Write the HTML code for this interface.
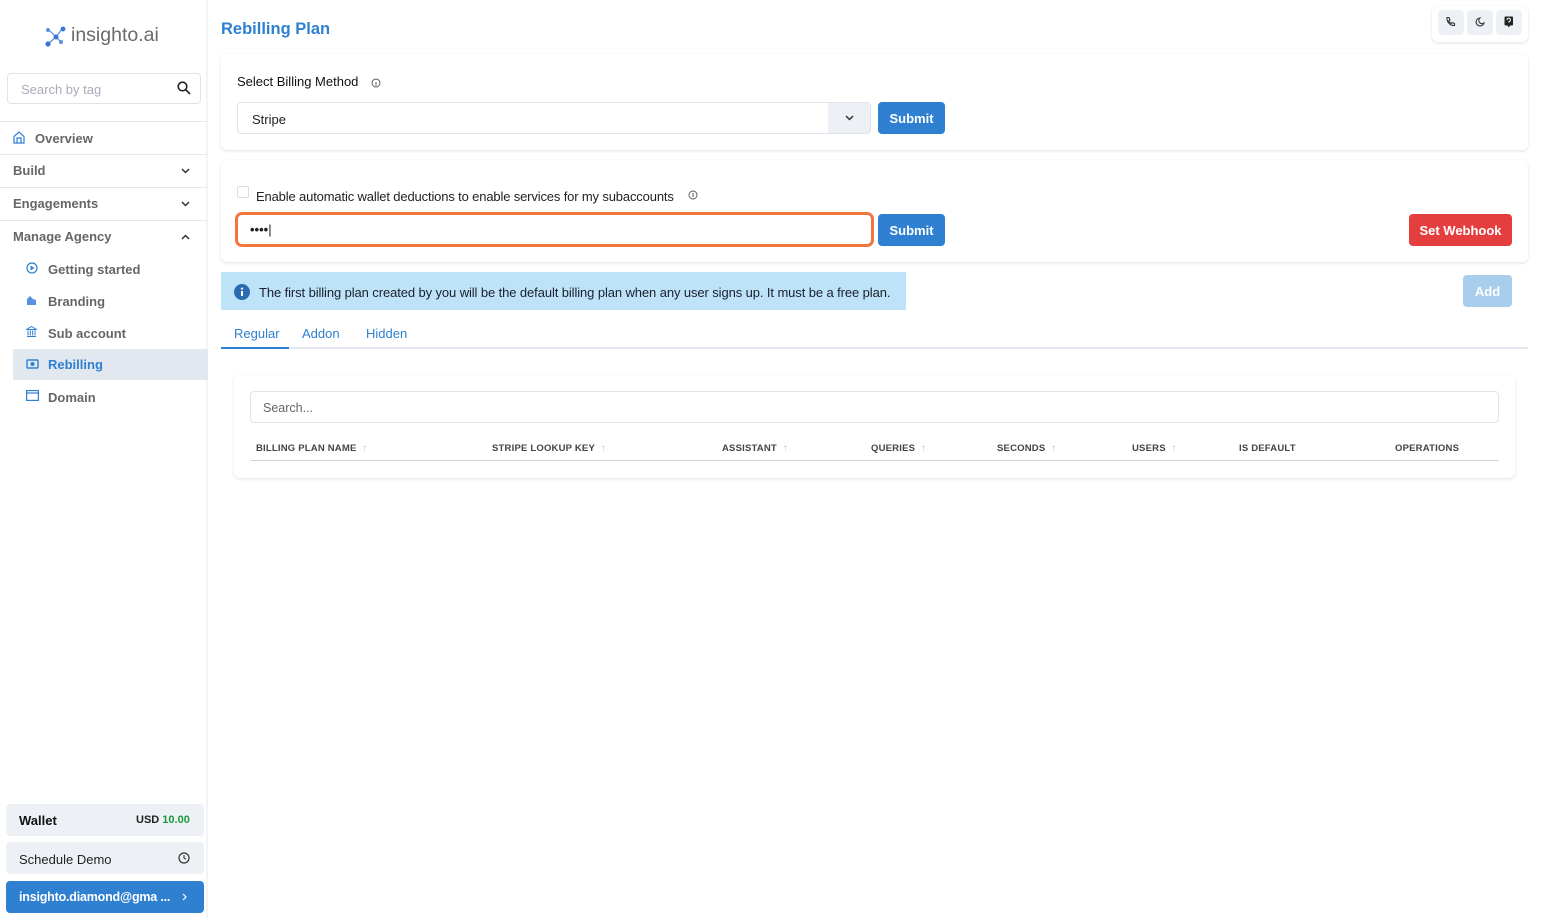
<!DOCTYPE html>
<html><head><meta charset="utf-8"><style>
*{box-sizing:border-box;margin:0;padding:0}
body{width:1541px;height:919px;position:relative;background:#fff;font-family:"Liberation Sans",sans-serif;font-size:13px;color:#222;overflow:hidden}
.a{position:absolute}
.side{left:0;top:0;width:208px;height:919px;border-right:2px solid #f2f4f7;background:#fff}
.nav{left:0;width:207px;height:33px;border-top:1px solid #e3e7ee;font-weight:bold;color:#666;font-size:13px;padding-left:13px;line-height:32px}
.sub{left:13px;width:195px;height:31px;font-weight:bold;color:#666;padding-left:35px;line-height:31px;font-size:13px}
.chev{position:absolute;right:17px;top:13px}
.card{background:#fff;border-radius:6px;box-shadow:0 1px 3px rgba(0,0,0,.12)}
.btn{background:#2f80d1;color:#fff;font-weight:bold;border-radius:4px;text-align:center;font-size:13px}
.th{top:443px;font-size:9.5px;font-weight:bold;color:#444;letter-spacing:.2px}
.th span{color:#bbb;margin-left:6px;font-weight:normal}
</style></head><body>
<div class="a side"></div>
<svg class="a" style="left:44px;top:26px" width="24" height="22" viewBox="0 0 24 22">
<g stroke="#5b8fe0" stroke-width="1.2"><line x1="5" y1="4" x2="12" y2="11"/><line x1="18" y1="3" x2="12" y2="11"/><line x1="12" y1="11" x2="5" y2="17"/><line x1="12" y1="11" x2="17" y2="16"/></g>
<circle cx="4" cy="4" r="2" fill="#5b8fe0"/><circle cx="19" cy="3" r="2.4" fill="#3a75d8"/><circle cx="12" cy="11" r="2.5" fill="#3a75d8"/><circle cx="4" cy="18" r="2.6" fill="#3a75d8"/><circle cx="17" cy="16" r="2" fill="#5b8fe0"/></svg>
<div class="a" style="left:71px;top:24px;font-size:19.5px;color:#6a6a6a">insighto.ai</div>
<div class="a" style="left:7px;top:73px;width:194px;height:31px;border:1px solid #dfe3ea;border-radius:4px"></div>
<div class="a" style="left:21px;top:82px;color:#aab;font-size:13px">Search by tag</div>
<svg class="a" style="left:177px;top:81px" width="14" height="14" viewBox="0 0 14 14"><circle cx="5.5" cy="5.5" r="4.3" fill="none" stroke="#222" stroke-width="1.6"/><line x1="8.7" y1="8.7" x2="13" y2="13" stroke="#222" stroke-width="1.6"/></svg>
<div class="a nav" style="top:121px;padding-left:35px;height:34px;line-height:33px">Overview</div>
<svg class="a" style="left:13px;top:131px" width="12" height="13" viewBox="0 0 12 13"><path d="M1 5.5L6 1l5 4.5V12H1z M4 12V7h4v5" fill="none" stroke="#2f80d1" stroke-width="1.2"/></svg>
<div class="a nav" style="top:154px">Build<svg class="chev" width="9" height="6"><path d="M1 1l3.5 3.5L8 1" fill="none" stroke="#333" stroke-width="1.5"/></svg></div>
<div class="a nav" style="top:187px">Engagements<svg class="chev" width="9" height="6"><path d="M1 1l3.5 3.5L8 1" fill="none" stroke="#333" stroke-width="1.5"/></svg></div>
<div class="a nav" style="top:220px;border-bottom:none">Manage Agency<svg class="chev" width="9" height="6"><path d="M1 5l3.5-3.5L8 5" fill="none" stroke="#333" stroke-width="1.5"/></svg></div>
<div class="a sub" style="top:254px">Getting started</div>
<svg class="a" style="left:26px;top:262px" width="12" height="12"><circle cx="6" cy="6" r="5" fill="none" stroke="#2f80d1" stroke-width="1.2"/><path d="M4.5 3.5L8.5 6L4.5 8.5z" fill="#2f80d1"/></svg>
<div class="a sub" style="top:286px">Branding</div>
<svg class="a" style="left:26px;top:295px" width="11" height="10"><path d="M1 10V4l3-3 3 3 3 1v5z" fill="#5b8fe0"/></svg>
<div class="a sub" style="top:318px">Sub account</div>
<svg class="a" style="left:26px;top:326px" width="11" height="11"><path d="M0.5 3.5L5.5 0.5 10.5 3.5z M1 10.5h9 M2 4.5v5 M4.3 4.5v5 M6.7 4.5v5 M9 4.5v5" fill="none" stroke="#2f80d1" stroke-width="1"/></svg>
<div class="a sub" style="top:349px;background:#e2e8f0;color:#2f80d1">Rebilling</div>
<svg class="a" style="left:26px;top:359px" width="13" height="10"><rect x="1" y="1" width="11" height="8" rx="1" fill="none" stroke="#2f80d1" stroke-width="1.4"/><circle cx="6.5" cy="5" r="2" fill="#2f80d1"/></svg>
<div class="a sub" style="top:382px">Domain</div>
<svg class="a" style="left:26px;top:390px" width="13" height="11"><rect x="0.6" y="0.6" width="11.8" height="9.8" fill="none" stroke="#2f80d1" stroke-width="1.2"/><line x1="0.6" y1="3" x2="12.4" y2="3" stroke="#2f80d1" stroke-width="1.2"/></svg>
<div class="a" style="left:6px;top:804px;width:198px;height:32px;background:#edf1f6;border-radius:4px"></div>
<div class="a" style="left:19px;top:813px;font-weight:bold;font-size:13px;color:#111">Wallet</div>
<div class="a" style="left:136px;top:814px;font-weight:bold;font-size:11px;color:#222">USD <span style="color:#189a3a">10.00</span></div>
<div class="a" style="left:6px;top:842px;width:198px;height:32px;background:#edf1f6;border-radius:4px"></div>
<div class="a" style="left:19px;top:852px;font-size:13px;color:#222">Schedule Demo</div>
<svg class="a" style="left:178px;top:852px" width="12" height="12"><circle cx="6" cy="6" r="5" fill="none" stroke="#333" stroke-width="1.2"/><path d="M6 3v3l2 1.3" fill="none" stroke="#333" stroke-width="1.1"/></svg>
<div class="a" style="left:6px;top:881px;width:198px;height:32px;background:#2f80d1;border-radius:4px"></div>
<div class="a" style="left:19px;top:890px;font-size:12.5px;color:#fff;font-weight:bold;letter-spacing:-.2px">insighto.diamond@gma ...</div>
<svg class="a" style="left:182px;top:893px" width="5" height="8"><path d="M1 1l3 3-3 3" fill="none" stroke="#fff" stroke-width="1.2"/></svg>
<div class="a" style="left:221px;top:20px;font-size:16.5px;font-weight:bold;color:#2f80d1">Rebilling Plan</div>
<div class="a card" style="left:1432px;top:6px;width:96px;height:36px"></div>
<div class="a" style="left:1438px;top:10px;width:26px;height:25px;background:#edf1f6;border-radius:4px"></div>
<div class="a" style="left:1467px;top:10px;width:26px;height:25px;background:#edf1f6;border-radius:4px"></div>
<div class="a" style="left:1496px;top:10px;width:26px;height:25px;background:#edf1f6;border-radius:4px"></div>
<svg class="a" style="left:1445px;top:16px" width="12" height="12"><path d="M2 1.5l2 0 1 2.5-1.3 1 2.3 2.6 1.2-1.1 2.3 1v2c-4 .5-8-3.5-7.5-8z" fill="none" stroke="#333" stroke-width="1.1"/></svg>
<svg class="a" style="left:1475px;top:17px" width="10" height="10"><path d="M5 1a4 4 0 1 0 4 5 3.2 3.2 0 0 1-4-5z" fill="none" stroke="#333" stroke-width="1.1"/></svg>
<svg class="a" style="left:1504px;top:16px" width="10" height="12"><rect x="0.5" y="0.5" width="8.5" height="9" rx="1" fill="#222"/><path d="M3 4a1.7 1.7 0 1 1 2 1.6v1" fill="none" stroke="#fff" stroke-width="1"/><path d="M3.5 9.5h2.5l-1.2 2z" fill="#222"/></svg>
<div class="a card" style="left:221px;top:54px;width:1307px;height:96px"></div>
<div class="a" style="left:237px;top:74px;font-size:13px;color:#111">Select Billing Method</div>
<svg class="a" style="left:371px;top:78px" width="10" height="10"><circle cx="5" cy="5" r="4" fill="none" stroke="#555" stroke-width=".9"/><line x1="5" y1="4" x2="5" y2="7.5" stroke="#555"/></svg>
<div class="a" style="left:237px;top:102px;width:634px;height:32px;border:1px solid #dfe3ea;border-radius:4px"></div>
<div class="a" style="left:828px;top:103px;width:42px;height:30px;background:#edf1f6;border-radius:0 4px 4px 0"></div>
<svg class="a" style="left:845px;top:115px" width="9" height="6"><path d="M1 1l3.5 3.5L8 1" fill="none" stroke="#333" stroke-width="1.5"/></svg>
<div class="a" style="left:252px;top:112px;font-size:13px;color:#222">Stripe</div>
<div class="a btn" style="left:878px;top:102px;width:67px;height:32px;line-height:33px">Submit</div>
<div class="a card" style="left:221px;top:160px;width:1307px;height:102px"></div>
<div class="a" style="left:237px;top:186px;width:12px;height:12px;border:1px solid #d8dce3;border-radius:2px"></div>
<div class="a" style="left:256px;top:189px;font-size:13px;color:#222;letter-spacing:-.15px">Enable automatic wallet deductions to enable services for my subaccounts</div>
<svg class="a" style="left:688px;top:190px" width="10" height="10"><circle cx="5" cy="5" r="4" fill="none" stroke="#555" stroke-width=".9"/><line x1="5" y1="3" x2="5" y2="7" stroke="#555"/></svg>
<div class="a" style="left:235px;top:212px;width:639px;height:35px;border:3px solid #f2743f;border-radius:7px"></div>
<div class="a" style="left:250px;top:222px;font-size:13px;color:#222;font-weight:bold">&bull;&bull;&bull;&bull;<span style="font-weight:normal">|</span></div>
<div class="a btn" style="left:878px;top:214px;width:67px;height:32px;line-height:34px">Submit</div>
<div class="a btn" style="left:1409px;top:214px;width:103px;height:32px;line-height:34px;background:#e53e3e">Set Webhook</div>
<div class="a" style="left:221px;top:272px;width:685px;height:38px;background:#bee3f8"></div>
<svg class="a" style="left:234px;top:284px" width="16" height="16"><circle cx="8" cy="8" r="8" fill="#2b6cb0"/><rect x="7" y="7" width="2" height="5" fill="#fff"/><circle cx="8" cy="4.6" r="1.1" fill="#fff"/></svg>
<div class="a" style="left:259px;top:285px;font-size:13px;color:#1a202c;letter-spacing:-.1px">The first billing plan created by you will be the default billing plan when any user signs up. It must be a free plan.</div>
<div class="a btn" style="left:1463px;top:275px;width:49px;height:32px;line-height:33px;background:#a9cdec">Add</div>
<div class="a" style="left:221px;top:347px;width:1307px;height:2px;background:#e3e7ee"></div>
<div class="a" style="left:221px;top:347px;width:68px;height:2px;background:#2f80d1"></div>
<div class="a" style="left:234px;top:326px;font-size:13px;color:#2f80d1">Regular</div>
<div class="a" style="left:302px;top:326px;font-size:13px;color:#2f80d1">Addon</div>
<div class="a" style="left:366px;top:326px;font-size:13px;color:#2f80d1">Hidden</div>
<div class="a card" style="left:234px;top:375px;width:1281px;height:103px"></div>
<div class="a" style="left:250px;top:391px;width:1249px;height:32px;border:1px solid #dfe3ea;border-radius:4px"></div>
<div class="a" style="left:263px;top:401px;font-size:12.5px;color:#666">Search...</div>
<div class="a th" style="left:256px">BILLING PLAN NAME<span>&uarr;</span></div>
<div class="a th" style="left:492px">STRIPE LOOKUP KEY<span>&uarr;</span></div>
<div class="a th" style="left:722px">ASSISTANT<span>&uarr;</span></div>
<div class="a th" style="left:871px">QUERIES<span>&uarr;</span></div>
<div class="a th" style="left:997px">SECONDS<span>&uarr;</span></div>
<div class="a th" style="left:1132px">USERS<span>&uarr;</span></div>
<div class="a th" style="left:1239px">IS DEFAULT</div>
<div class="a th" style="left:1395px">OPERATIONS</div>
<div class="a" style="left:250px;top:460px;width:1249px;height:1px;background:#d0d6de"></div>
</body></html>
